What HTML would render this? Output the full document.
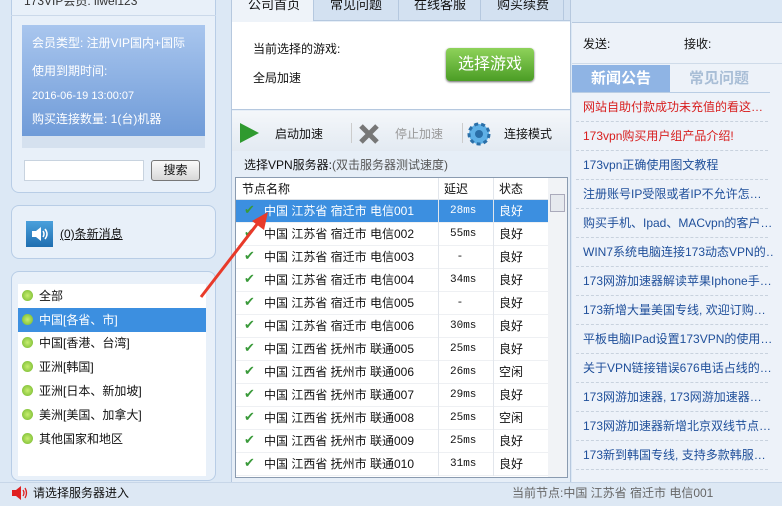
<!DOCTYPE html>
<html><head><meta charset="utf-8"><style>
*{margin:0;padding:0;box-sizing:border-box}
body{width:782px;height:506px;overflow:hidden;background:#dce8f5;font-family:"Liberation Sans","Noto Sans CJK SC",sans-serif;font-size:12px;color:#111;position:relative}
.a{position:absolute}
.panel{position:absolute;background:#e8f0f9;border:1px solid #b8cde6;border-radius:8px}
.t{position:absolute;white-space:nowrap;line-height:14px}
.row{position:absolute;left:236px;width:312px;height:23px;border-bottom:1px solid #eef0f3;background:#fff}
.row span{position:absolute;top:4px;white-space:nowrap;line-height:14px}
.row .c{left:8px;color:#3a9a3a;font-size:13px;top:3px}
.row .n{left:28px}.row .d{left:214px;font-family:"Liberation Mono",monospace;font-size:11px}.row .s{left:263px}
.row.sel{background:#3c8fe0;color:#fff}
.cl{position:absolute;top:0;width:1px;height:100%;background:#e4e8ee}
.news{position:absolute;left:583px;width:190px;white-space:nowrap;overflow:hidden;color:#1f4f9a;font-size:12px;line-height:14px}
.sep{position:absolute;left:576px;width:192px;border-top:1px dashed #c8d2de}
.li{position:absolute;left:22px;white-space:nowrap;line-height:14px}
.li i{display:inline-block;width:11px;height:11px;border-radius:50%;background:radial-gradient(#c8ee70,#6fb52a);margin-right:6px;vertical-align:-1px}
</style></head><body>
<!-- left top panel -->
<div class="panel" style="left:11px;top:-10px;width:205px;height:203px"></div>
<div class="t" style="left:24px;top:-6px;color:#333">173VIP会员: liwei123</div>
<div class="a" style="left:11px;top:15px;width:205px;border-top:1px solid #cbd9ea"></div>
<div class="a" style="left:22px;top:25px;width:183px;height:111px;background:linear-gradient(#a9c6ee,#6f9bd8)"></div>
<div class="a" style="left:22px;top:136px;width:183px;height:12px;background:#d5e1ef"></div>
<div class="t" style="left:32px;top:36px;color:#fff">会员类型: 注册VIP国内+国际</div>
<div class="t" style="left:32px;top:64px;color:#fff">使用到期时间:</div>
<div class="t" style="left:32px;top:89px;color:#fff;font-size:11px">2016-06-19 13:00:07</div>
<div class="t" style="left:32px;top:112px;color:#fff">购买连接数量: 1(台)机器</div>
<div class="a" style="left:24px;top:160px;width:120px;height:21px;background:#fff;border:1px solid #c8d3df"></div>
<div class="a" style="left:151px;top:160px;width:49px;height:21px;background:linear-gradient(#fafafa,#d8d8d8);border:1px solid #777;border-radius:3px;text-align:center;line-height:19px">搜索</div>
<!-- message -->
<div class="panel" style="left:11px;top:205px;width:205px;height:54px"></div>
<div class="a" style="left:26px;top:221px;width:27px;height:26px;background:linear-gradient(#4aa0dc,#1f6eb0)"></div>
<svg class="a" style="left:30px;top:226px" width="20" height="16"><path d="M2 5h4l5-4v14l-5-4H2z" fill="#fff"/><path d="M13 5q2 3 0 6M15 3q4 5 0 10" stroke="#fff" stroke-width="1.5" fill="none"/></svg>
<div class="t" style="left:60px;top:227px;text-decoration:underline">(0)条新消息</div>
<!-- list -->
<div class="panel" style="left:11px;top:271px;width:205px;height:210px"></div>
<div class="a" style="left:18px;top:284px;width:188px;height:192px;background:#fff"></div>
<div class="a" style="left:18px;top:308px;width:188px;height:24px;background:#3c8fe0"></div>
<div class="li" style="top:289px"><i></i>全部</div>
<div class="li" style="top:313px;color:#fff"><i></i>中国[各省、市]</div>
<div class="li" style="top:336px"><i></i>中国[香港、台湾]</div>
<div class="li" style="top:360px"><i></i>亚洲[韩国]</div>
<div class="li" style="top:384px"><i></i>亚洲[日本、新加坡]</div>
<div class="li" style="top:408px"><i></i>美洲[美国、加拿大]</div>
<div class="li" style="top:432px"><i></i>其他国家和地区</div>
<!-- bottom status -->
<div class="a" style="left:0;top:482px;width:782px;height:24px;background:#dde8f4;border-top:1px solid #c7d6e8"></div>
<svg class="a" style="left:11px;top:486px" width="18" height="14"><path d="M1 4h4l5-4v14l-5-4H1z" fill="#e02020"/><path d="M12 4q2 3 0 6M14 2q3 5 0 10" stroke="#e02020" stroke-width="1.3" fill="none"/></svg>
<div class="t" style="left:33px;top:486px">请选择服务器进入</div>
<div class="t" style="left:512px;top:486px;color:#666">当前节点:中国 江苏省 宿迁市 电信001</div>
<!-- middle -->
<div class="a" style="left:231px;top:0;width:340px;height:482px;background:#e6eef7;border-left:1px solid #b6c8de;border-right:1px solid #b6c8de"></div>
<div class="a" style="left:232px;top:0;width:338px;height:21px;background:#d3e1f1;border-bottom:1px solid #b5c8df"></div>
<div class="a" style="left:232px;top:0;width:81px;height:22px;background:#eef3f9"></div>
<div class="a" style="left:313px;top:0;width:1px;height:21px;background:#b5c8df"></div>
<div class="a" style="left:398px;top:0;width:1px;height:21px;background:#b5c8df"></div>
<div class="a" style="left:480px;top:0;width:1px;height:21px;background:#b5c8df"></div>
<div class="a" style="left:563px;top:0;width:1px;height:21px;background:#b5c8df"></div>
<div class="t" style="left:248px;top:-2px;font-size:13px">公司首页</div>
<div class="t" style="left:330px;top:-2px;font-size:13px">常见问题</div>
<div class="t" style="left:414px;top:-2px;font-size:13px">在线客服</div>
<div class="t" style="left:497px;top:-2px;font-size:13px">购买续费</div>
<div class="a" style="left:232px;top:22px;width:338px;height:88px;background:#fff;border-bottom:1px solid #b5c8df"></div>
<div class="t" style="left:253px;top:42px">当前选择的游戏:</div>
<div class="t" style="left:253px;top:71px">全局加速</div>
<div class="a" style="left:446px;top:48px;width:88px;height:33px;border-radius:4px;background:linear-gradient(#8ed25a,#4b9d25);box-shadow:0 1px 2px #666;color:#fff;font-size:16px;text-align:center;line-height:33px">选择游戏</div>
<div class="a" style="left:232px;top:111px;width:338px;height:40px;background:linear-gradient(#f4f7fa,#e3eaf2)"></div>
<svg class="a" style="left:238px;top:122px" width="22" height="22"><path d="M2 1l19 10L2 21z" fill="#2f9a2f"/></svg>
<div class="t" style="left:275px;top:127px">启动加速</div>
<div class="a" style="left:351px;top:123px;width:1px;height:20px;background:#ccc"></div>
<svg class="a" style="left:358px;top:123px" width="22" height="22"><path d="M3 3l16 16M19 3L3 19" stroke="#777" stroke-width="5"/></svg>
<div class="t" style="left:395px;top:127px;color:#999">停止加速</div>
<div class="a" style="left:462px;top:123px;width:1px;height:20px;background:#ccc"></div>
<svg class="a" style="left:466px;top:121px" width="26" height="26"><circle cx="13" cy="13" r="10" fill="#5eb0e6" stroke="#2a6fa8" stroke-width="3" stroke-dasharray="4 3"/><circle cx="13" cy="13" r="4" fill="#2a6fa8"/></svg>
<div class="t" style="left:504px;top:127px">连接模式</div>
<div class="t" style="left:244px;top:158px">选择VPN服务器:<span style="color:#555">(双击服务器测试速度)</span></div>
<div class="a" style="left:235px;top:177px;width:333px;height:301px;background:#fff;border:1px solid #8a9bb0"></div>
<div class="a" style="left:236px;top:178px;width:312px;height:22px;background:#fff;border-bottom:1px solid #dde2e8"></div>
<div class="t" style="left:242px;top:182px">节点名称</div>
<div class="t" style="left:444px;top:182px">延迟</div>
<div class="t" style="left:499px;top:182px">状态</div>
<div class="a" style="left:548px;top:178px;width:19px;height:299px;background:#f1f3f6"></div>
<div class="a" style="left:550px;top:194px;width:15px;height:18px;background:#e6e9ee;border:1px solid #aab"></div>
<div class="row sel" style="top:200px"><span class="c" style="color:#3a9a3a">✔</span><span class="n">中国 江苏省 宿迁市 电信001</span><span class="d">28ms</span><span class="s">良好</span></div>
<div class="row" style="top:223px"><span class="c">✔</span><span class="n">中国 江苏省 宿迁市 电信002</span><span class="d">55ms</span><span class="s">良好</span></div>
<div class="row" style="top:246px"><span class="c">✔</span><span class="n">中国 江苏省 宿迁市 电信003</span><span class="d">&nbsp;-</span><span class="s">良好</span></div>
<div class="row" style="top:269px"><span class="c">✔</span><span class="n">中国 江苏省 宿迁市 电信004</span><span class="d">34ms</span><span class="s">良好</span></div>
<div class="row" style="top:292px"><span class="c">✔</span><span class="n">中国 江苏省 宿迁市 电信005</span><span class="d">&nbsp;-</span><span class="s">良好</span></div>
<div class="row" style="top:315px"><span class="c">✔</span><span class="n">中国 江苏省 宿迁市 电信006</span><span class="d">30ms</span><span class="s">良好</span></div>
<div class="row" style="top:338px"><span class="c">✔</span><span class="n">中国 江西省 抚州市 联通005</span><span class="d">25ms</span><span class="s">良好</span></div>
<div class="row" style="top:361px"><span class="c">✔</span><span class="n">中国 江西省 抚州市 联通006</span><span class="d">26ms</span><span class="s">空闲</span></div>
<div class="row" style="top:384px"><span class="c">✔</span><span class="n">中国 江西省 抚州市 联通007</span><span class="d">29ms</span><span class="s">良好</span></div>
<div class="row" style="top:407px"><span class="c">✔</span><span class="n">中国 江西省 抚州市 联通008</span><span class="d">25ms</span><span class="s">空闲</span></div>
<div class="row" style="top:430px"><span class="c">✔</span><span class="n">中国 江西省 抚州市 联通009</span><span class="d">25ms</span><span class="s">良好</span></div>
<div class="row" style="top:453px"><span class="c">✔</span><span class="n">中国 江西省 抚州市 联通010</span><span class="d">31ms</span><span class="s">良好</span></div>
<div class="a" style="left:438px;top:178px;width:1px;height:298px;background:#e2e6ec"></div>
<div class="a" style="left:493px;top:178px;width:1px;height:298px;background:#e2e6ec"></div>
<!-- right -->
<div class="a" style="left:572px;top:22px;width:210px;height:460px;background:#edf2f9;border-top:1px solid #b7c9df"></div>
<div class="a" style="left:572px;top:63px;width:210px;border-top:1px solid #cfdbe9"></div>
<div class="t" style="left:583px;top:37px">发送:</div>
<div class="t" style="left:684px;top:37px">接收:</div>
<div class="a" style="left:572px;top:65px;width:98px;height:27px;background:#8fb4e4;color:#fff;font-weight:bold;font-size:15px;text-align:center;line-height:27px">新闻公告</div>
<div class="a" style="left:670px;top:65px;width:98px;height:27px;color:#a9bed6;font-weight:bold;font-size:15px;text-align:center;line-height:27px">常见问题</div>
<div class="a" style="left:572px;top:92px;width:198px;border-top:1px solid #b9cde4"></div>
<div class="news" style="top:100px;color:#d81e1e">网站自助付款成功未充值的看这…</div>
<div class="sep" style="top:121px"></div>
<div class="news" style="top:129px;color:#d81e1e">173vpn购买用户组产品介绍!</div>
<div class="sep" style="top:150px"></div>
<div class="news" style="top:158px">173vpn正确使用图文教程</div>
<div class="sep" style="top:179px"></div>
<div class="news" style="top:187px">注册账号IP受限或者IP不允许怎…</div>
<div class="sep" style="top:208px"></div>
<div class="news" style="top:216px">购买手机、Ipad、MACvpn的客户…</div>
<div class="sep" style="top:237px"></div>
<div class="news" style="top:245px">WIN7系统电脑连接173动态VPN的…</div>
<div class="sep" style="top:266px"></div>
<div class="news" style="top:274px">173网游加速器解读苹果Iphone手…</div>
<div class="sep" style="top:295px"></div>
<div class="news" style="top:303px">173新增大量美国专线, 欢迎订购…</div>
<div class="sep" style="top:324px"></div>
<div class="news" style="top:332px">平板电脑IPad设置173VPN的使用…</div>
<div class="sep" style="top:353px"></div>
<div class="news" style="top:361px">关于VPN链接错误676电话占线的…</div>
<div class="sep" style="top:382px"></div>
<div class="news" style="top:390px">173网游加速器, 173网游加速器…</div>
<div class="sep" style="top:411px"></div>
<div class="news" style="top:419px">173网游加速器新增北京双线节点…</div>
<div class="sep" style="top:440px"></div>
<div class="news" style="top:448px">173新到韩国专线, 支持多款韩服…</div>
<div class="sep" style="top:469px"></div>
<!-- red arrow -->
<svg class="a" style="left:0;top:0" width="782" height="506"><line x1="201" y1="297" x2="258" y2="223" stroke="#e83a2a" stroke-width="3"/><path d="M268 212l-4 18-12-9z" fill="#e83a2a"/></svg>
</body></html>
